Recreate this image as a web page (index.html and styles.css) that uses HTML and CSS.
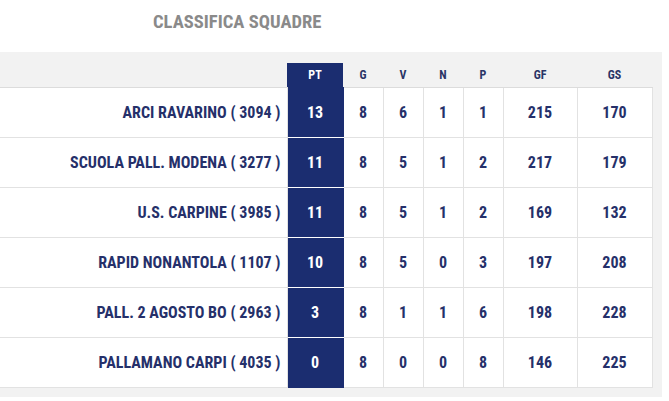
FILE: index.html
```html
<!DOCTYPE html>
<html lang="it">
<head>
<meta charset="utf-8">
<title>Classifica Squadre</title>
<link rel="stylesheet" href="styles.css">
</head>
<body>
<h2 class="title">CLASSIFICA SQUADRE</h2>
<div class="panel">
<table class="standings">
<thead>
<tr>
<th class="team"></th>
<th class="pt">PT</th>
<th class="sm">G</th>
<th class="sm">V</th>
<th class="sm">N</th>
<th class="sm">P</th>
<th class="lg">GF</th>
<th class="lg">GS</th>
</tr>
</thead>
<tbody>
<tr><td class="team">ARCI RAVARINO ( 3094 )</td><td class="pt">13</td><td>8</td><td>6</td><td>1</td><td>1</td><td>215</td><td>170</td></tr>
<tr><td class="team">SCUOLA PALL. MODENA ( 3277 )</td><td class="pt">11</td><td>8</td><td>5</td><td>1</td><td>2</td><td>217</td><td>179</td></tr>
<tr><td class="team">U.S. CARPINE ( 3985 )</td><td class="pt">11</td><td>8</td><td>5</td><td>1</td><td>2</td><td>169</td><td>132</td></tr>
<tr><td class="team">RAPID NONANTOLA ( 1107 )</td><td class="pt">10</td><td>8</td><td>5</td><td>0</td><td>3</td><td>197</td><td>208</td></tr>
<tr><td class="team">PALL. 2 AGOSTO BO ( 2963 )</td><td class="pt">3</td><td>8</td><td>1</td><td>1</td><td>6</td><td>198</td><td>228</td></tr>
<tr><td class="team">PALLAMANO CARPI ( 4035 )</td><td class="pt">0</td><td>8</td><td>0</td><td>0</td><td>8</td><td>146</td><td>225</td></tr>
</tbody>
</table>
</div>
</body>
</html>
```

FILE: styles.css
```css
html, body {
  margin: 0;
  padding: 0;
  background: #ffffff;
}
body {
  font-family: "Roboto Condensed", "Liberation Sans Narrow", "DejaVu Sans Condensed", "Roboto", sans-serif;
  font-stretch: condensed;
  font-weight: 700;
  color: #25306a;
}
.title {
  margin: 0;
  height: 52px;
  box-sizing: border-box;
  padding: 11px 0 0 153px;
  font-size: 18.6px;
  line-height: 22px;
  color: #8a8a8a;
  font-weight: 700;
}
.panel {
  width: 662px;
  background: #f2f2f2;
  padding: 11px 0 9px 0;
  box-sizing: border-box;
}
.standings {
  width: 652px;
  border-collapse: collapse;
  table-layout: fixed;
}
.standings th {
  height: 24px;
  padding: 0;
  font-size: 12px;
  text-align: center;
  color: #2a3566;
  border-bottom: 1px solid #dcdcdc;
}
.standings th.team { width: 287px; }
.standings th.pt { width: 56px; background: #1b2d70; color: #ffffff; border-bottom: 1px solid #1b2d70; }
.standings th.sm { width: 40px; }
.standings th.lg { width: 74px; }
.standings th.lg:last-child { width: 75px; }
.standings td {
  height: 49px;
  padding: 0;
  background: #ffffff;
  border: 1px solid #e2e2e2;
  text-align: center;
  font-size: 16px;
  color: #25306a;
}
.standings tr td:first-child { border-left: 0; }
.standings td.team {
  text-align: right;
  padding-right: 6px;
}
.standings td.pt {
  background: #1b2d70;
  color: #ffffff;
  border-top: 1px solid #ffffff;
  border-bottom: 1px solid #ffffff;
  border-left-color: #1b2d70;
  border-right-color: #1b2d70;
}
.standings tbody tr:first-child td.pt { border-top-color: #1b2d70; }
.standings tbody tr:last-child td.pt { border-bottom-color: #1b2d70; }
```
